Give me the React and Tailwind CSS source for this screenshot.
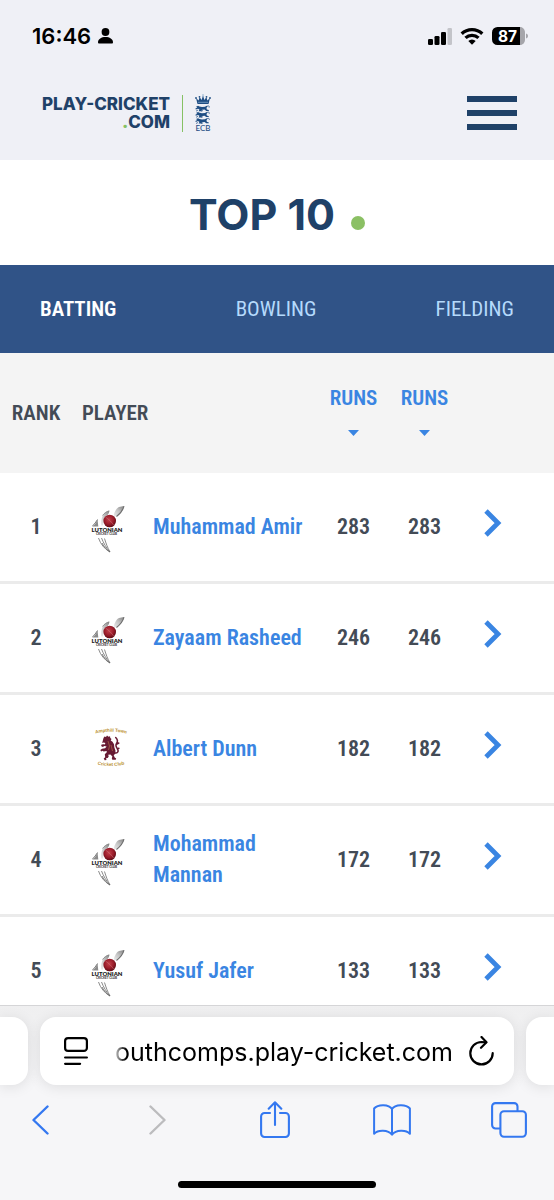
import React from "react";

const condensed = "font-['Roboto_Condensed','Roboto',sans-serif]";

const players = [
  { rank: 1, name: "Muhammad Amir", club: "lutonian", runs: 283 },
  { rank: 2, name: "Zayaam Rasheed", club: "lutonian", runs: 246 },
  { rank: 3, name: "Albert Dunn", club: "ampthill", runs: 182 },
  { rank: 4, name: "Mohammad Mannan", club: "lutonian", runs: 172 },
  { rank: 5, name: "Yusuf Jafer", club: "lutonian", runs: 133 },
];

function LutonianBadge() {
  return (
    <svg viewBox="0 1 60 70" className="block h-[70px] w-[60px]" role="img" aria-label="Lutonian Cricket Club">
      <defs>
        <linearGradient id="blade" x1="0" y1="1" x2="1" y2="0">
          <stop offset="0" stopColor="#efefef" />
          <stop offset="0.5" stopColor="#c4c4c4" />
          <stop offset="1" stopColor="#808080" />
        </linearGradient>
        <radialGradient id="ball" cx="0.45" cy="0.4" r="0.6">
          <stop offset="0" stopColor="#c2404a" />
          <stop offset="0.6" stopColor="#9a1c2a" />
          <stop offset="1" stopColor="#5e0d16" />
        </radialGradient>
      </defs>
      <path d="M33.500 24.500c1.500-4.500 3-7.500 5.500-8.500 1.500-.7 3.500-.8 5-.8-1 4-3.500 7.500-7.500 10.300z" fill="url(#blade)" />
      <path d="M36.500 25.500c4-3 6.500-6.500 7.500-10.300" stroke="#6e6e6e" strokeWidth="1.100" fill="none" />
      <path d="M21 32c.5-6 2.500-11 8.500-12.500-.3 2-1 3.500-2 4.500-3 2-4 5-4.500 10.500h-2z" fill="url(#blade)" />
      <path d="M22.500 24.500c2-2.500 4-4 6.500-4.500" stroke="#888" strokeWidth="0.900" fill="none" />
      <path d="M12 35.500c2.500-1 4.500-4 5.500-7l.8 7z" fill="#8a8a8a" />
      <path d="M12.500 35c2-2 3.500-4 5-6.500" stroke="#444" strokeWidth="0.700" fill="none" />
      <circle cx="29.700" cy="30" r="6.300" fill="url(#ball)" />
      <path d="M25.500 26c3 2 6.500 5.500 8.500 8.500" stroke="#cf7a80" strokeWidth="0.500" fill="none" />
      <text x="27" y="41" textAnchor="middle" fontSize="5.900" fontWeight="800" fill="#222" className="font-['Lato',sans-serif]">LUTONIAN</text>
      <text x="26.500" y="44.300" textAnchor="middle" fontSize="3" fontWeight="800" fill="#444" className="font-['Lato',sans-serif]">CRICKET CLUB</text>
      <path d="M18.500 47c2 6 6 11 11.500 14M21.500 47c2 5 4.500 9.500 8.500 14M24.500 47.500c1.500 5 3 9 5.500 13.500" stroke="#8b8b8b" strokeWidth="1" fill="none" />
      <path d="M22 52c2 4 5 7 8 9" stroke="#5c5c5c" strokeWidth="0.800" fill="none" />
    </svg>
  );
}

function AmpthillBadge() {
  return (
    <svg viewBox="0 0 60 70" className="block h-[70px] w-[60px]" role="img" aria-label="Ampthill Town Cricket Club">
      <defs>
        <path id="arc-top" d="M12 20.500Q31 15 50 20.500" />
        <path id="arc-bottom" d="M12 49Q31 55 50 49" />
      </defs>
      <text fontSize="4.600" fontWeight="700" fill="#b98d2c" textAnchor="middle" className="font-['Liberation_Sans',sans-serif]">
        <textPath href="#arc-top" startOffset="50%">Ampthill Town</textPath>
      </text>
      <path fill="#681a33" d="M23.500 24l1-1.500 1.500.5 1-1.500 1.500 1.200 1.500-.4.300 1.800 1.200.8-.8 1.600 1.800 1.200 1.500 2.500.3 3 1.200 3.500-.3 3-1.500 1.500 1 2.300 1.500 1-.5 1.200h-3.400l-.5-1.500.6-1.700-2-2-2.200.3.500 1.600-1 1.500-1.700.3.500 1.700-1.800.3-1-1.700 1.500-1.200-.4-3 2-2-.2-1.300-3 .5-1-.8-1.500.8-.8-1.500 1.800-1.300 3-.5 1.500-1.700-2.200-.4-1.600 1-1.700-1 .5-1.600 1.800-.3 1.400.3.600-1.500-1.700-.4-1.500.3z" />
      <path fill="none" stroke="#681a33" strokeWidth="1.500" strokeLinecap="round" d="M34.500 39c3 .5 4.500-1.500 3-4s-2.500-3.500-1-5.500 1.200-4-.8-6M37 30l1.800-1M37.300 35l1.600-.7" />
      <path fill="none" stroke="#b97a4a" strokeWidth="0.600" d="M28 27l1.500 5-1 4M31 31l1.500 6" />
      <text fontSize="4.600" fontWeight="700" fill="#b98d2c" textAnchor="middle" className="font-['Liberation_Sans',sans-serif]">
        <textPath href="#arc-bottom" startOffset="50%">Cricket Club</textPath>
      </text>
    </svg>
  );
}

function Lion({ y }) {
  return (
    <g transform={`translate(0 ${y})`} fill="#1f4e84">
      <path d="M1 1.200l2-.9 1.500.8 2.500.4 3-.2 1.500-1 1 .6-1 1.400.3 1.600 2 .6v.9h-2.600l-1.600-1.300-2.400.2-1 1.400H3.600l.8-1.700L3 3.200.8 4 .4 3l1.900-1z" />
      <path d="M1 5.600l2-1M6 5.800l2-.8M12 .8c2-1 3 .3 2 1.400" stroke="#1f4e84" strokeWidth="0.700" fill="none" />
    </g>
  );
}

function EcbCrest() {
  return (
    <svg viewBox="0 0 16 38" className="block h-[38px] w-4" role="img" aria-label="ECB">
      <path d="M2.500 10L1 4l2.600 2.500L4.600 3l2 3L8 1.500 9.400 6l2-3 1 3.500L15 4l-1.500 6z" fill="#1f4e84" />
      <path d="M8 0v3M3 8.300h10" stroke="#7da4c8" strokeWidth="0.800" />
      <circle cx="1" cy="4" r=".9" fill="#1f4e84" />
      <circle cx="4.500" cy="2.800" r=".9" fill="#1f4e84" />
      <circle cx="11.500" cy="2.800" r=".9" fill="#1f4e84" />
      <circle cx="15" cy="4" r=".9" fill="#1f4e84" />
      <Lion y={11.5} />
      <Lion y={17.7} />
      <Lion y={23.9} />
      <text x="8" y="37" textAnchor="middle" fontSize="8" fontWeight="500" fill="#1f4e84" className="font-['Lato',sans-serif]">ECB</text>
    </svg>
  );
}

function StatusBar() {
  return (
    <div className="flex h-[72px] items-center justify-between pr-[26px] pl-8 text-black">
      <div className="flex items-center gap-[7px]">
        <span className="font-['Inter',sans-serif] text-[22px] leading-7 font-semibold">16:46</span>
        <svg viewBox="0 0 15 16" className="h-4 w-[15px]" aria-hidden="true">
          <circle cx="7.500" cy="4" r="3.900" />
          <path d="M0 14.300C0 11 3.500 9 7.500 9s7.500 2 7.500 5.300c0 .8-.4 1.200-1.200 1.200H1.200c-.8 0-1.200-.4-1.200-1.200z" />
        </svg>
      </div>
      <div className="flex items-center gap-2">
        <svg viewBox="0 0 25 17" className="h-[17px] w-[25px]" aria-hidden="true">
          <rect x="1" y="11" width="5" height="6" rx="1.300" />
          <rect x="7.500" y="8" width="5" height="9" rx="1.300" />
          <rect x="14" y="4" width="5" height="13" rx="1.300" />
          <rect x="20.500" y="0" width="4.500" height="17" rx="1.300" fill="#c3c4c9" />
        </svg>
        <svg viewBox="0 0 24 18" className="h-[18px] w-6" aria-hidden="true" fill="none" stroke="#000" strokeWidth="3.300">
          <path d="M1.700 6.700a14.800 14.800 0 0 1 20.600 0" />
          <path d="M5.500 10.900a9.400 9.400 0 0 1 13 0" />
          <path d="M12 17.700l-3.700-3.700a5.200 5.200 0 0 1 7.400 0z" fill="#000" stroke="none" />
        </svg>
        <svg viewBox="0 0 36 18" className="h-[18px] w-9" role="img" aria-label="Battery 87%">
          <path d="M5.500 0H28v18H5.500A5.500 5.500 0 0 1 0 12.500v-7A5.500 5.500 0 0 1 5.500 0z" />
          <path d="M28 0c3 0 5 2.500 5 5.500v7c0 3-2 5.500-5 5.500z" fill="#a5a5aa" />
          <path d="M34 6.500c1.500.5 2 1.500 2 2.500s-.5 2-2 2.500z" fill="#a5a5aa" />
          <text x="15.500" y="14.700" textAnchor="middle" fontSize="15.500" fontWeight="700" fill="#fff" className="font-['Inter',sans-serif]">87</text>
        </svg>
      </div>
    </div>
  );
}

function SiteHeader() {
  return (
    <header className="flex h-[88px] items-center justify-between pr-[37px] pb-[6px] pl-[42px]">
      <a href="#home" className="flex items-center gap-3 text-[#1f4168]">
        <span className="flex flex-col text-right font-['Inter',sans-serif] text-[17px] leading-[18px] font-extrabold">
          <span>PLAY-CRICKET</span>
          <span><span className="font-black text-[#86c164]">.</span>COM</span>
        </span>
        <span className="h-[37px] w-px bg-[#86c164]" />
        <EcbCrest />
      </a>
      <button type="button" aria-label="Menu" className="flex w-[50px] flex-col gap-2">
        <span className="h-[6px] bg-[#1f4168]" />
        <span className="h-[6px] bg-[#1f4168]" />
        <span className="h-[6px] bg-[#1f4168]" />
      </button>
    </header>
  );
}

function SortHeading() {
  return (
    <th scope="col" className="p-0 pb-2">
      <button type="button" className="mx-auto flex flex-col items-center gap-4 font-semibold text-[#3a85e2]">
        <span>RUNS</span>
        <svg viewBox="0 0 11 6" className="h-[6px] w-[11px]" aria-hidden="true">
          <path d="M0 0h11L5.500 6z" fill="#3a85e2" />
        </svg>
      </button>
    </th>
  );
}

function Leaderboard() {
  return (
    <table className={`${condensed} w-full table-fixed border-separate border-spacing-0 text-[22px] leading-[31px] font-semibold text-[#434b56]`}>
      <colgroup>
        <col className="w-[72px]" />
        <col className="w-[81px]" />
        <col />
        <col className="w-[71px]" />
        <col className="w-[71px]" />
        <col className="w-[94px]" />
      </colgroup>
      <thead>
        <tr className="h-[120px] bg-[#f4f4f4] text-[21px]">
          <th scope="col" className="p-0 text-center font-semibold">RANK</th>
          <th scope="col" colSpan={2} className="p-0 pl-[10px] text-left font-semibold">PLAYER</th>
          <SortHeading />
          <SortHeading />
          <td />
        </tr>
      </thead>
      <tbody>
        {players.map((p) => (
          <tr key={p.rank} className="h-[111px] bg-white *:border-b-[3px] *:border-[#ebebeb]">
            <td className="p-0 pb-[2px] text-center">{p.rank}</td>
            <td className="p-0 pl-2">{p.club === "lutonian" ? <LutonianBadge /> : <AmpthillBadge />}</td>
            <td className="p-0 pb-[2px]">
              <a href={`#player-${p.rank}`} className="text-[#3a85e2]">{p.name}</a>
            </td>
            <td className="p-0 pb-[2px] text-center">{p.runs}</td>
            <td className="p-0 pb-[2px] text-center">{p.runs}</td>
            <td className="p-0 pb-2 pl-6">
              <a href={`#player-${p.rank}`} aria-label={`View ${p.name}`} className="block w-[18px]">
                <svg viewBox="0 0 18 28" className="block h-7 w-[18px]" fill="none" stroke="#3a85e2" strokeWidth="4.800">
                  <path d="M2 2l12 12L2 26" />
                </svg>
              </a>
            </td>
          </tr>
        ))}
      </tbody>
    </table>
  );
}

function BrowserBar() {
  return (
    <footer className="shrink-0 border-t border-[#d5d5d7] bg-[#f6f6f8]">
      <div className="flex gap-3 bg-linear-to-b from-[#efeff0] to-[#f6f6f8] pt-[11px]">
        <div className="h-[68px] w-7 rounded-r-2xl bg-white shadow-[0_2px_14px_rgba(0,0,0,0.1)]" />
        <div className="flex h-[68px] min-w-0 flex-1 items-center rounded-2xl bg-white pr-5 pl-6 text-black shadow-[0_2px_14px_rgba(0,0,0,0.1)]">
          <button type="button" aria-label="Page settings">
            <svg viewBox="0 0 24 28" className="block h-7 w-6" fill="none" stroke="#000" strokeWidth="2.200" strokeLinecap="round">
              <rect x="1.100" y="1.100" width="21.800" height="12.800" rx="3" />
              <path d="M1.100 20.500h21.800M1.100 26.800h15" />
            </svg>
          </button>
          <div className="ml-6 flex min-w-0 flex-1 justify-end overflow-hidden mask-l-from-[calc(100%-14px)] mask-l-to-100% pt-[2px] font-['Inter',sans-serif] text-[25px] leading-9 whitespace-nowrap">
            outhcomps.play-cricket.com
          </div>
          <button type="button" aria-label="Reload" className="ml-4">
            <svg viewBox="0 0 25 30" className="block h-[30px] w-[25px]" fill="none" stroke="#000" strokeWidth="2.200" strokeLinecap="round" strokeLinejoin="round">
              <path d="M17 6.300l-4.500-.3A11.200 11.200 0 1 0 23.700 17.200" />
              <path d="M12.500 1l5 5.300-5.500 5.500" />
            </svg>
          </button>
        </div>
        <div className="h-[68px] w-7 rounded-l-2xl bg-white shadow-[0_2px_14px_rgba(0,0,0,0.1)]" />
      </div>
      <nav className="flex h-[70px] items-center justify-between pr-[25px] pl-5 *:flex *:w-10 *:justify-center" aria-label="Browser">
        <button type="button" aria-label="Back">
          <svg viewBox="0 0 17 30" className="block h-[30px] w-[17px]" fill="none" stroke="#3478f0" strokeWidth="2.400" strokeLinecap="round" strokeLinejoin="round">
            <path d="M15.500 1.500L1.500 15l14 13.500" />
          </svg>
        </button>
        <button type="button" aria-label="Forward">
          <svg viewBox="0 0 17 30" className="block h-[30px] w-[17px]" fill="none" stroke="#bcbcbe" strokeWidth="2.400" strokeLinecap="round" strokeLinejoin="round">
            <path d="M1.500 1.500l14 13.500-14 13.500" />
          </svg>
        </button>
        <button type="button" aria-label="Share">
          <svg viewBox="0 0 30 38" className="block h-[38px] w-[30px]" fill="none" stroke="#3478f0" strokeWidth="2.100" strokeLinecap="round" strokeLinejoin="round">
            <path d="M10 12H4.500A3.400 3.400 0 0 0 1.100 15.400v17.200A3.400 3.400 0 0 0 4.500 36h21a3.400 3.400 0 0 0 3.400-3.400V15.400A3.400 3.400 0 0 0 25.500 12H20M15 24V1.500M8.700 7.700L15 1.300l6.300 6.400" />
          </svg>
        </button>
        <button type="button" aria-label="Bookmarks">
          <svg viewBox="0 0 38 32" className="block h-8 w-[38px]" fill="none" stroke="#3478f0" strokeWidth="2" strokeLinecap="round" strokeLinejoin="round">
            <path d="M19 5C16 .2 5 0 1.100 4.500v25.200C5 25.500 15 25.500 19 30.700c4-5.200 14-5.200 17.900-1V4.500C33 0 22 .2 19 5zM19 5v25.500" />
          </svg>
        </button>
        <button type="button" aria-label="Tabs">
          <svg viewBox="0 0 36 36" className="block h-9 w-9" fill="none" stroke="#3478f0" strokeWidth="2.100">
            <path d="M9 26.500H4.500a3.400 3.400 0 0 1-3.400-3.400V4.500a3.400 3.400 0 0 1 3.400-3.400h18.600a3.400 3.400 0 0 1 3.400 3.400V9" />
            <rect x="9.400" y="9.200" width="25.500" height="25.500" rx="3.600" />
          </svg>
        </button>
      </nav>
      <div className="flex h-[45px] items-end justify-center pb-3">
        <span className="h-[7px] w-[198px] rounded-full bg-black" />
      </div>
    </footer>
  );
}

export default function App() {
  return (
    <div className="flex h-screen flex-col overflow-hidden bg-white">
      <div className="shrink-0 bg-[#eff0f6]">
        <StatusBar />
        <SiteHeader />
      </div>
      <main className="min-h-0 flex-1 overflow-hidden">
        <h1 className="flex h-[105px] items-center justify-center gap-4 pt-1 font-['Inter',sans-serif] text-[43px] leading-none font-bold text-[#1f4168]">
          TOP 10
          <span className="mt-4 size-[14px] rounded-full bg-[#8bc064]" />
        </h1>
        <nav className={`${condensed} flex h-[88px] items-center justify-between bg-[#305387] px-10 text-[21px] leading-[31px] text-[#b5dafc]`} aria-label="Statistics">
          <a href="#batting" aria-current="page" className="font-semibold text-white">BATTING</a>
          <a href="#bowling">BOWLING</a>
          <a href="#fielding">FIELDING</a>
        </nav>
        <Leaderboard />
      </main>
      <BrowserBar />
    </div>
  );
}
